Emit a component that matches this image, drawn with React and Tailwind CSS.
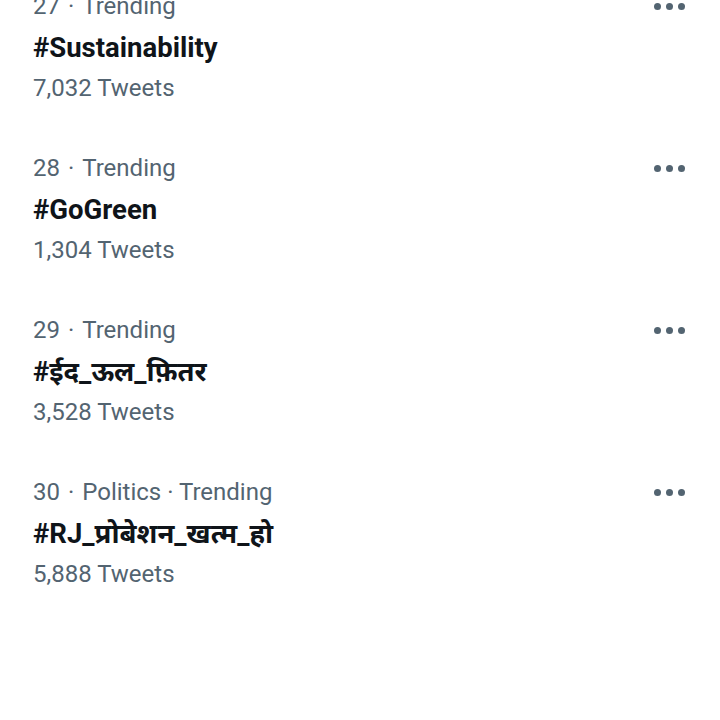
const trends = [
  { rank: 27, meta: 'Trending', tag: '#Sustainability', count: '7,032' },
  { rank: 28, meta: 'Trending', tag: '#GoGreen', count: '1,304' },
  { rank: 29, meta: 'Trending', tag: '#ईद_ऊल_फ़ितर', count: '3,528' },
  { rank: 30, meta: 'Politics · Trending', tag: '#RJ_प्रोबेशन_खत्म_हो', count: '5,888' },
]

function MoreDots() {
  return (
    <div className="flex items-center gap-[5px] h-[41px]">
      <span className="w-[7px] h-[7px] rounded-full bg-[#536471]" />
      <span className="w-[7px] h-[7px] rounded-full bg-[#536471]" />
      <span className="w-[7px] h-[7px] rounded-full bg-[#536471]" />
    </div>
  )
}

export default function App() {
  return (
    <div
      className="w-[720px] h-[720px] overflow-hidden bg-white"
      style={{ fontFamily: 'Roboto, "Noto Sans", "Noto Sans Devanagari", sans-serif' }}
    >
      <div className="-mt-[33px]">
        {trends.map(t => (
          <div key={t.rank} className="flex justify-between pl-[33px] pr-[35px] pt-[19px] pb-[20px]">
            <div className="flex flex-col">
              <div className="text-[24px] leading-[41px] text-[#536471] whitespace-nowrap">
                {t.rank}
                <span className="mx-[8px]">·</span>
                {t.meta}
              </div>
              <div className="text-[27.5px] leading-[41px] font-bold text-[#0f1419]">
                {t.tag}
              </div>
              <div className="text-[24px] leading-[41px] text-[#536471]">
                {t.count} Tweets
              </div>
            </div>
            <MoreDots />
          </div>
        ))}
      </div>
    </div>
  )
}
